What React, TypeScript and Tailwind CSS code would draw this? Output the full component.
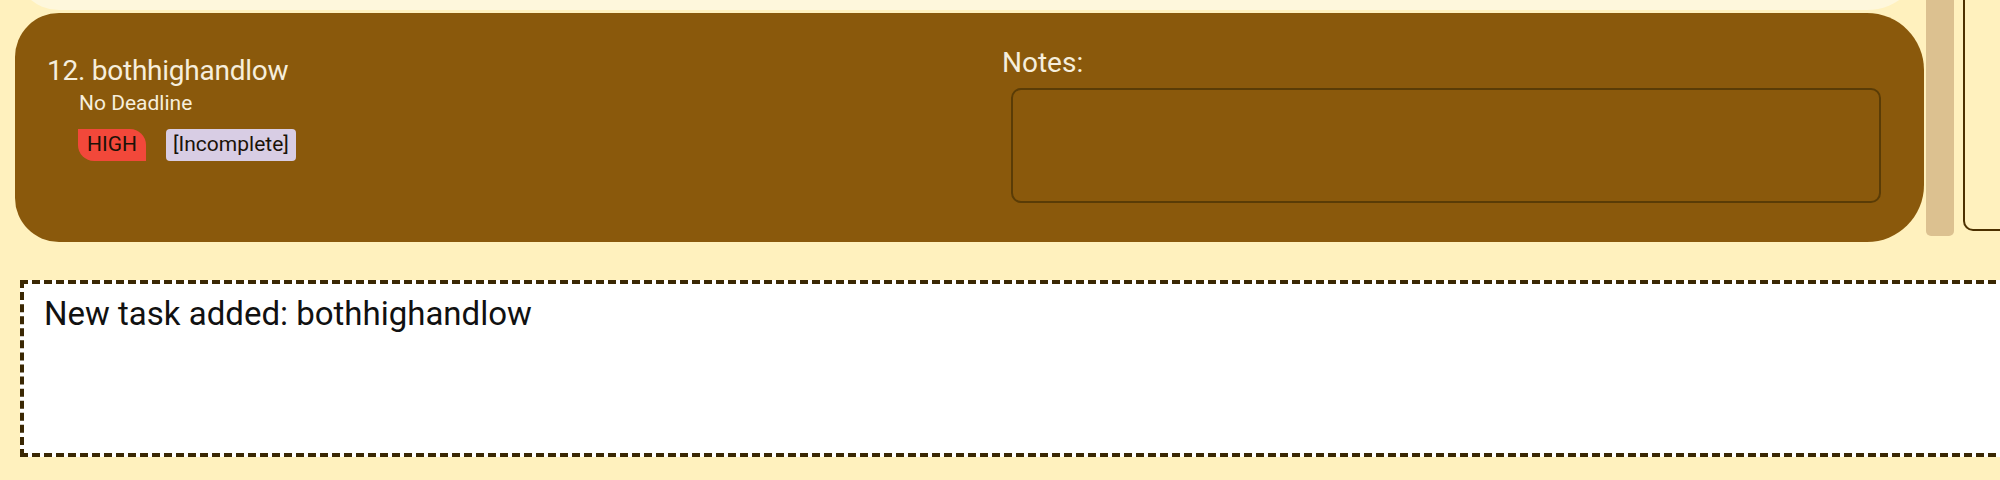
export default function App() {
  return (
    <div className="flex h-[480px] w-[2000px] flex-col overflow-hidden bg-[#FFF1BE] font-['Roboto',sans-serif]">
      {/* task list + side panel */}
      <div className="flex h-[250px]">
        <div className="flex w-[1924px] flex-col pl-[15px]">
          {/* previous card, scrolled out of view */}
          <div className="-mt-[220px] h-[230px] rounded-l-[44px] rounded-r-[57px] bg-[#FEF7DC]" />

          {/* current card */}
          <div className="mt-[3px] flex h-[229px] rounded-l-[44px] rounded-r-[57px] bg-[#8A590C] text-[#F6EEDC]">
            <div className="flex-1 pl-[32px] pt-[41px]">
              <div className="text-[28px] leading-[33px] tracking-[-0.25px]">12. bothhighandlow</div>
              <div className="mt-[4px] pl-[32px] text-[21px] leading-[24px]">No Deadline</div>
              <div className="mt-[14px] flex gap-[20px] pl-[31px]">
                <span className="flex h-[32px] items-center rounded-bl-[16px] rounded-tr-[16px] bg-[#F2483A] px-[9px] text-[21px] text-[#1A1208]">
                  HIGH
                </span>
                <span className="flex h-[32px] items-center rounded-[4px] bg-[#D8CDE4] px-[7px] text-[21px] text-[#1A1208]">
                  [Incomplete]
                </span>
              </div>
            </div>
            <div className="w-[922px] pr-[43px] pt-[33px]">
              <div className="text-[28px] leading-[33px]">Notes:</div>
              <div className="ml-[9px] mt-[9px] h-[115px] rounded-[10px] border-2 border-[#5A3C06]" />
            </div>
          </div>
        </div>

        {/* scrollbar */}
        <div className="ml-[2px] h-[236px] w-[28px] rounded-b-[5px] bg-[#DCC190]" />

        {/* right panel */}
        <div className="ml-[9px] h-[231px] flex-1 rounded-bl-[10px] border-b-2 border-l-2 border-[#4D3100] bg-[#FFF1BE]" />
      </div>

      {/* result display */}
      <div className="ml-[20px] mt-[30px] h-[177px] w-[2000px] border-4 border-dashed border-[#3A2704] bg-white pl-[20px] pt-[10px]">
        <div className="text-[33px] leading-[39px] text-[#111111]">New task added: bothhighandlow</div>
      </div>
    </div>
  );
}
